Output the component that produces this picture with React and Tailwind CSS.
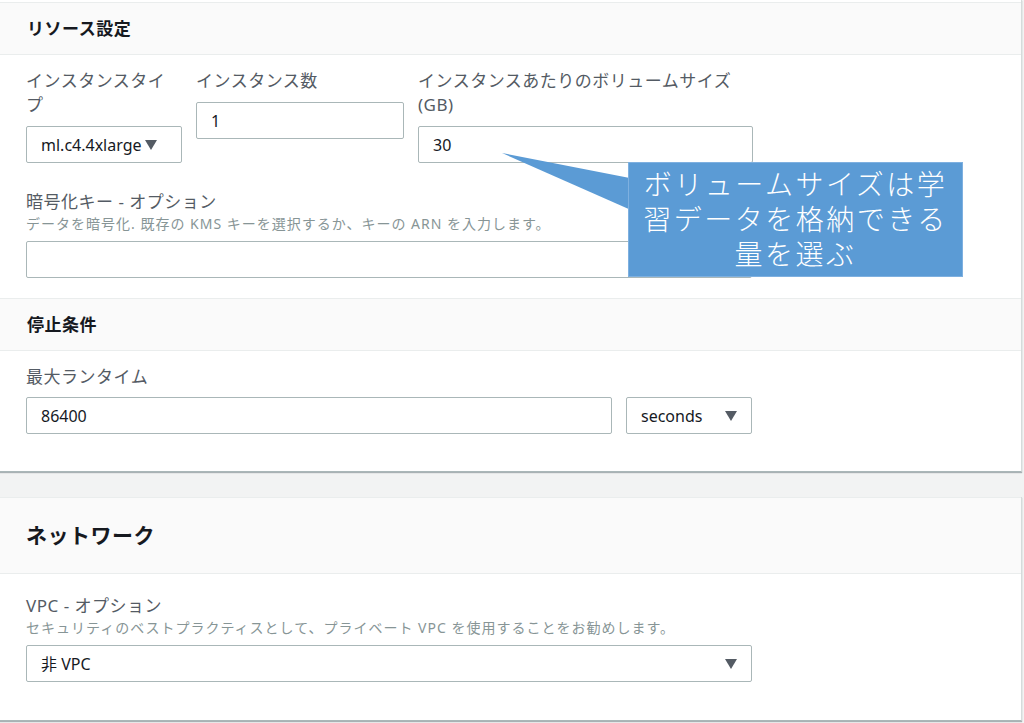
import React from "react";

const font = { fontFamily: '"Noto Sans", "Noto Sans CJK JP", sans-serif' };

const Caret = () => (
  <svg width="12" height="10" viewBox="0 0 12 10" className="shrink-0">
    <path d="M0 0 H12 L6 10 Z" fill="#545b64" />
  </svg>
);

const Label = ({ children, className = "" }) => (
  <div className={`text-[17px] leading-[24px] tracking-[0.5px] text-[#545b64] ${className}`}>
    {children}
  </div>
);

const Hint = ({ children }) => (
  <div className="text-[14px] leading-[19px] tracking-[1px] text-[#879596]">{children}</div>
);

const Field = ({ children, className = "" }) => (
  <div
    className={`h-[37px] border border-[#aab7b8] rounded-[2px] bg-white flex items-center px-[14px] text-[16px] text-[#16191f] ${className}`}
  >
    {children}
  </div>
);

const SectionHead = ({ children, top = true }) => (
  <div
    className={`h-[53px] bg-[#fafafa] border-b border-[#eaeded] ${top ? "border-t" : ""} flex items-center px-[27px]`}
  >
    <h3 className="text-[17px] font-bold tracking-[0.5px] text-[#16191f]">{children}</h3>
  </div>
);

export default function App() {
  return (
    <div className="relative w-[1024px] h-[723px] overflow-hidden bg-[#f2f3f3]" style={font}>
      {/* CARD: RESOURCE + STOP CONDITION */}
      <div className="mr-[2px] pt-[2px] bg-white border-r border-[#d5dbdb] border-b border-b-[#aab7b8] shadow-[0_1px_1px_0_rgba(0,28,36,0.3)]">
        <SectionHead>リソース設定</SectionHead>
        <div className="px-[26px] pt-[14px] pb-[20px]">
          <div className="flex items-start gap-[14px]">
            <div className="w-[156px] flex flex-col gap-[9px]">
              <Label>インスタンスタイプ</Label>
              <Field className="gap-[3px]">
                <span>ml.c4.4xlarge</span>
                <Caret />
              </Field>
            </div>
            <div className="w-[208px] flex flex-col gap-[9px]">
              <Label>インスタンス数</Label>
              <Field>1</Field>
            </div>
            <div className="w-[335px] flex flex-col gap-[9px]">
              <Label>インスタンスあたりのボリュームサイズ (GB)</Label>
              <Field>30</Field>
            </div>
          </div>
          <div className="mt-[27px] w-[726px]">
            <Label>暗号化キー - オプション</Label>
            <Hint>データを暗号化. 既存の KMS キーを選択するか、キーの ARN を入力します。</Hint>
            <Field className="mt-[8px]" />
          </div>
        </div>

        <SectionHead>停止条件</SectionHead>
        <div className="px-[26px] pt-[14px] pb-[37px]">
          <Label>最大ランタイム</Label>
          <div className="mt-[8px] flex gap-[14px] w-[726px]">
            <Field className="flex-1">86400</Field>
            <Field className="w-[126px] justify-between">
              <span>seconds</span>
              <Caret />
            </Field>
          </div>
        </div>
      </div>

      {/* CARD: NETWORK */}
      <div className="mt-[25px] mr-[2px] bg-white border-r border-[#d5dbdb] border-b border-b-[#aab7b8] shadow-[0_1px_1px_0_rgba(0,28,36,0.3)]">
        <div className="h-[77px] bg-[#fafafa] border-t border-b border-[#eaeded] flex items-center px-[26px]">
          <h2 className="text-[21px] font-bold tracking-[0.5px] text-[#16191f]">ネットワーク</h2>
        </div>
        <div className="px-[26px] pt-[20px] pb-[38px] w-[778px]">
          <Label>VPC - オプション</Label>
          <Hint>セキュリティのベストプラクティスとして、プライベート VPC を使用することをお勧めします。</Hint>
          <Field className="mt-[8px] justify-between">
            <span>非 VPC</span>
            <Caret />
          </Field>
        </div>
      </div>

      {/* CALLOUT */}
      <svg className="absolute left-0 top-0 pointer-events-none" width="1024" height="300">
        <polygon points="502,153 640,180 640,214" fill="#5b9bd5" />
      </svg>
      <div className="absolute left-[628px] top-[162px] w-[335px] h-[115px] bg-[#5b9bd5] border border-[#7eb0e0] flex flex-col items-center justify-center text-white text-[28px] font-light leading-[35px] tracking-[2.5px]">
        <span>ボリュームサイズは学</span>
        <span>習データを格納できる</span>
        <span>量を選ぶ</span>
      </div>
    </div>
  );
}
